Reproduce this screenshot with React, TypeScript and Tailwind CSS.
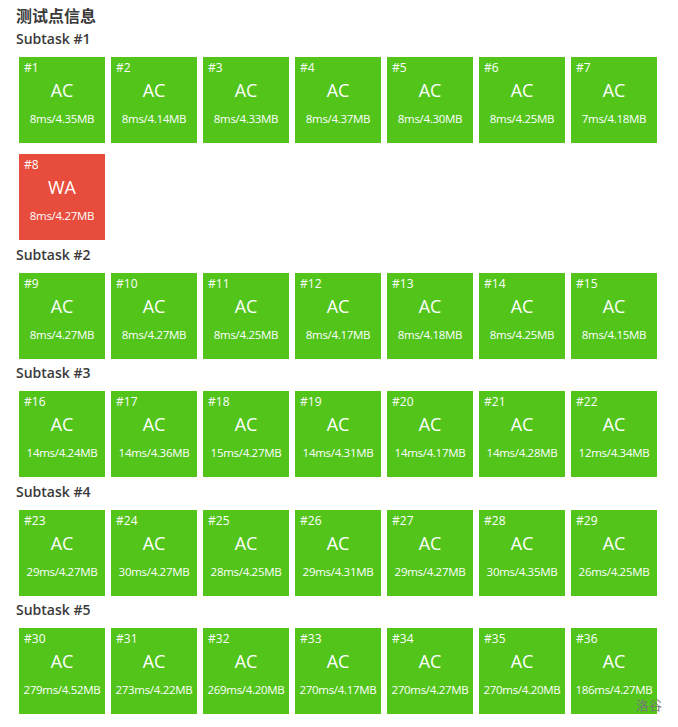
import React from 'react';

interface Case {
  id: number;
  status: 'AC' | 'WA';
  time: number;
  mem: string;
}

const raw: [number, string, string][][] = [
  [
    [8, '4.35', 'AC'], [8, '4.14', 'AC'], [8, '4.33', 'AC'], [8, '4.37', 'AC'],
    [8, '4.30', 'AC'], [8, '4.25', 'AC'], [7, '4.18', 'AC'], [8, '4.27', 'WA'],
  ],
  [
    [8, '4.27', 'AC'], [8, '4.27', 'AC'], [8, '4.25', 'AC'], [8, '4.17', 'AC'],
    [8, '4.18', 'AC'], [8, '4.25', 'AC'], [8, '4.15', 'AC'],
  ],
  [
    [14, '4.24', 'AC'], [14, '4.36', 'AC'], [15, '4.27', 'AC'], [14, '4.31', 'AC'],
    [14, '4.17', 'AC'], [14, '4.28', 'AC'], [12, '4.34', 'AC'],
  ],
  [
    [29, '4.27', 'AC'], [30, '4.27', 'AC'], [28, '4.25', 'AC'], [29, '4.31', 'AC'],
    [29, '4.27', 'AC'], [30, '4.35', 'AC'], [26, '4.25', 'AC'],
  ],
  [
    [279, '4.52', 'AC'], [273, '4.22', 'AC'], [269, '4.20', 'AC'], [270, '4.17', 'AC'],
    [270, '4.27', 'AC'], [270, '4.20', 'AC'], [186, '4.27', 'AC'],
  ],
];

let counter = 0;
const subtasks: Case[][] = raw.map((group) =>
  group.map(([time, mem, status]) => {
    counter += 1;
    return { id: counter, time, mem, status: status as Case['status'] };
  })
);

function CaseBox({ c }: { c: Case }) {
  return (
    <div
      className={`w-[86px] h-[86px] flex flex-col text-white ${
        c.status === 'AC' ? 'bg-[#52c41a]' : 'bg-[#e74c3c]'
      }`}
    >
      <div className="pl-[5px] pt-[3px] text-[12px] leading-[16px] text-left">#{c.id}</div>
      <div className="mt-[2px] text-[18px] leading-[24px] text-center">{c.status}</div>
      <div className="mt-[9px] text-[11.5px] leading-[16px] text-center tracking-[-0.3px]">
        {c.time}ms/{c.mem}MB
      </div>
    </div>
  );
}

export default function App() {
  return (
    <div
      className="relative w-[678px] h-[727px] bg-white px-4 pt-[5px] text-[#3a3a3a]"
      style={{ fontFamily: '"Open Sans", "Noto Sans CJK SC", sans-serif' }}
    >
      <h3 className="text-[16px] leading-[22px] font-semibold">测试点信息</h3>
      {subtasks.map((cases, i) => (
        <div key={i} className="mb-[2.5px]">
          <div className="pt-[2px] text-[14px] leading-[20px] font-semibold">Subtask #{i + 1}</div>
          <div className="mt-[8px] pl-[3px] flex flex-wrap gap-x-[6px] gap-y-[11px]">
            {cases.map((c) => (
              <CaseBox key={c.id} c={c} />
            ))}
          </div>
        </div>
      ))}
      <div className="absolute left-[636px] top-[696px] text-[13px] text-[#777]">洛谷</div>
    </div>
  );
}
